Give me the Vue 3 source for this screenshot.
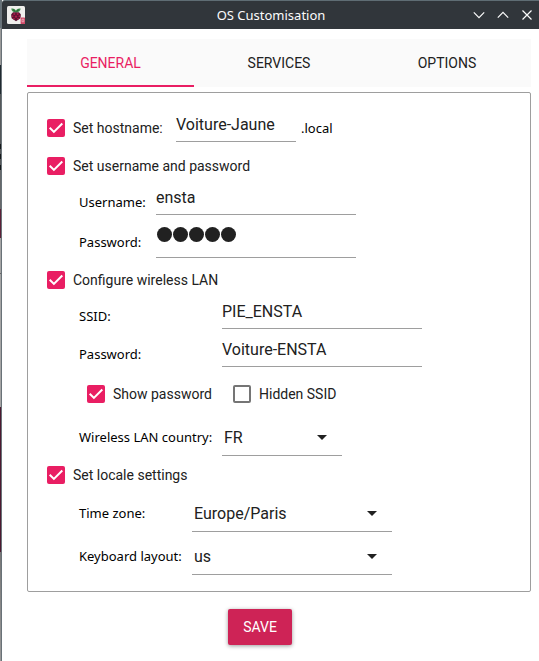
<script setup>
import { ref } from 'vue'

const tabs = ['GENERAL', 'SERVICES', 'OPTIONS']
const active = ref('GENERAL')
const passwordLength = 5
</script>

<template>
  <div class="desktop">
    <div class="backdrop"></div>
    <div class="window">
      <header class="titlebar">
        <svg class="app-icon" viewBox="0 0 18 18">
          <rect width="18" height="18" rx="1.5" fill="#efefed" />
          <path d="M4.3 2.6C6 2 8 2.7 8.9 4.5 9.8 2.7 12 2 13.6 2.6 13.5 4.8 12.3 6.4 8.9 6.5 5.6 6.4 4.4 4.8 4.3 2.6Z" fill="#3f8f4f" />
          <path d="M6 3.6 8.4 5.6M12 3.6 9.5 5.6" stroke="#23472b" stroke-width=".8" />
          <path d="M6 6.2H12L13.9 8.6 13.4 12.2 9 15.3 4.6 12.2 4.1 8.6Z" fill="#5a1230" />
          <g fill="#a81c4a">
            <circle cx="7.3" cy="8" r="1.1" /><circle cx="10.7" cy="8" r="1.1" />
            <circle cx="5.6" cy="10.2" r=".9" /><circle cx="9" cy="10.6" r="1.2" /><circle cx="12.4" cy="10.2" r=".9" />
            <circle cx="7" cy="12.7" r=".9" /><circle cx="11" cy="12.7" r=".9" />
          </g>
          <rect x="13.6" y="11.6" width="4.4" height="6.4" rx=".6" fill="#d04a68" />
          <path d="M15 13.2H16.8V15.8H15Z" fill="none" stroke="#f2c3cd" stroke-width=".7" />
        </svg>
        <span class="title">OS Customisation</span>
        <div class="controls">
          <svg viewBox="0 0 12 12"><path d="M.8 3.4 6 8.6 11.2 3.4" /></svg>
          <svg viewBox="0 0 12 12"><path d="M.8 8.6 6 3.4 11.2 8.6" /></svg>
          <svg viewBox="0 0 12 12"><path d="M1.5 1.5 10.5 10.5M10.5 1.5 1.5 10.5" /></svg>
        </div>
      </header>

      <nav class="tabs">
        <button v-for="t in tabs" :key="t" class="tab" :class="{ active: t === active }" @click="active = t">{{ t }}</button>
      </nav>

      <section class="panel">
        <div class="row host">
          <span class="box on"><svg viewBox="0 0 18 18"><path d="M2.7 8.7 6.9 12.9 15.3 4.5" /></svg></span>
          <span class="check-label">Set hostname:</span>
          <span class="field hostname">Voiture-Jaune</span>
          <span class="label suffix">.local</span>
        </div>
        <div class="row">
          <span class="box on"><svg viewBox="0 0 18 18"><path d="M2.7 8.7 6.9 12.9 15.3 4.5" /></svg></span>
          <span class="check-label">Set username and password</span>
        </div>
        <div class="row sub account username">
          <span class="label">Username:</span>
          <span class="field">ensta</span>
        </div>
        <div class="row sub account secret">
          <span class="label">Password:</span>
          <span class="field masked"><i v-for="n in passwordLength" :key="n" class="dot"></i></span>
        </div>
        <div class="row wireless">
          <span class="box on"><svg viewBox="0 0 18 18"><path d="M2.7 8.7 6.9 12.9 15.3 4.5" /></svg></span>
          <span class="check-label">Configure wireless LAN</span>
        </div>
        <div class="row sub network ssid">
          <span class="label">SSID:</span>
          <span class="field">PIE_ENSTA</span>
        </div>
        <div class="row sub network passphrase">
          <span class="label">Password:</span>
          <span class="field">Voiture-ENSTA</span>
        </div>
        <div class="row toggles">
          <span class="box on"><svg viewBox="0 0 18 18"><path d="M2.7 8.7 6.9 12.9 15.3 4.5" /></svg></span>
          <span class="check-label show">Show password</span>
          <span class="box"></span>
          <span class="check-label">Hidden SSID</span>
        </div>
        <div class="row sub network country">
          <span class="label">Wireless LAN country:</span>
          <span class="select short">FR<i class="arrow"></i></span>
        </div>
        <div class="row">
          <span class="box on"><svg viewBox="0 0 18 18"><path d="M2.7 8.7 6.9 12.9 15.3 4.5" /></svg></span>
          <span class="check-label">Set locale settings</span>
        </div>
        <div class="row sub locale">
          <span class="label">Time zone:</span>
          <span class="select">Europe/Paris<i class="arrow"></i></span>
        </div>
        <div class="row sub locale keyboard">
          <span class="label">Keyboard layout:</span>
          <span class="select">us<i class="arrow"></i></span>
        </div>
      </section>

      <button class="save">SAVE</button>
    </div>
  </div>
</template>

<style>
body { margin: 0; background: #fff; }
</style>

<style scoped>
* { box-sizing: border-box; }
.desktop { display: flex; width: 539px; height: 661px; overflow: hidden; font-family: Roboto, sans-serif; color: #212121; }
.backdrop {
  width: 1px;
  background: linear-gradient(#66727a 0 28px, #9a9a9a 28px 65px, #202a30 65px 94px, #55585a 94px 144px, #15181a 144px 149px, #55585a 149px 154px, #15181a 154px 159px, #55585a 159px 165px, #15181a 165px 170px, #66686a 170px 209px, #5c2038 209px 238px, #a5a5a5 238px 273px, #666 273px 274px, #a5a5a5 274px 407px, #4c1930 407px 552px, #777 552px, #999 661px);
}
.window { width: 538px; display: flex; flex-direction: column; border-left: 1px solid #697278; background: #fff; }
.titlebar { height: 29px; flex: none; display: flex; align-items: center; padding: 0 6px 0 5px; background: #31363b; border-top: 1px solid #5f6d74; border-radius: 3px 0 0 0; }
.app-icon { width: 18px; height: 18px; }
.title { flex: 1; text-align: center; padding-left: 44px; font: 13px/18px "Noto Sans", sans-serif; color: #fcfcfc; }
.controls { display: flex; gap: 12px; }
.controls svg { width: 12px; height: 12px; fill: none; stroke: #fcfcfc; stroke-width: 1.2; }
.tabs { display: flex; flex: none; width: 504px; height: 48px; margin: 10px 0 0 25px; background: #fafafa; }
.tab { width: 168px; height: 48px; padding: 0; border: 0; background: none; font: 14px/48px Roboto, sans-serif; color: #212121; text-align: center; }
.tab.active { width: 167px; margin-right: 1px; color: #e91e63; box-shadow: inset 0 -2px #e91e63; }
.panel { flex: none; width: 504px; height: 500px; margin: 5px 0 0 25px; padding: 16px 0 0 19px; border: 1px solid #9e9e9e; border-radius: 2px; }
.row { display: flex; align-items: center; height: 38px; white-space: nowrap; }
.sub { padding-left: 32px; }
.box { width: 18px; height: 18px; flex: none; border: 2px solid #757575; border-radius: 2px; }
.box.on { border: 0; background: #e91e63; }
.box svg { display: block; width: 18px; height: 18px; fill: none; stroke: #fff; stroke-width: 2; }
.check-label { margin-left: 8px; font-size: 14px; line-height: 18px; }
.label { font: 13px/18px "Noto Sans", sans-serif; color: #000; }
.field, .select { flex: none; display: flex; align-self: flex-end; width: 200px; border-bottom: 1px solid #9e9e9e; font-size: 16px; }
.field { height: 28px; line-height: 22px; }
.host .check-label { width: 95px; }
.host .hostname { width: 120px; margin: 0 0 5px 8px; }
.suffix { margin-left: 5px; }
.account .label { width: 77px; padding-bottom: 1px; }
.username { height: 24px; margin-top: 6px; }
.username .label { padding-bottom: 2px; }
.secret { height: 31px; margin-top: 12px; }
.masked { height: 31px; padding: 0 0 0 0.5px; gap: 1px; }
.dot { width: 15px; height: 15px; border-radius: 50%; background: #212121; }
.wireless { margin-top: 3px; }
.network .label { width: 143px; }
.ssid { height: 26px; margin-top: 4px; }
.passphrase { height: 25px; margin-top: 13px; }
.passphrase .label { padding-bottom: 1px; }
.toggles { margin-top: 8px; padding-left: 40px; }
.show { width: 120px; }
.country, .keyboard { margin-top: 5px; }
.locale .label { width: 113px; }
.select { height: 38px; padding: 2px 15px 0 2px; line-height: 34px; justify-content: space-between; align-items: center; }
.select.short { width: 120px; }
.arrow { border: 5px solid transparent; border-top-color: #212121; border-bottom: 0; }
.save { flex: none; width: 64px; height: 36px; margin: 17px 0 0 226px; padding: 0; border: 0; border-radius: 2px; background: #ce2356; color: #fff; font: 14px/36px Roboto, sans-serif; box-shadow: 0 1px 4px rgba(0, 0, 0, .4); }
</style>
